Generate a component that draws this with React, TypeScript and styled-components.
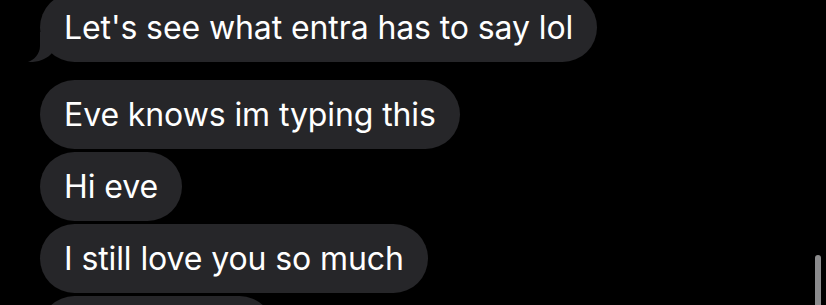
import React from 'react'
import styled, { createGlobalStyle } from 'styled-components'

const GlobalStyle = createGlobalStyle`
  html, body {
    margin: 0;
    padding: 0;
    background: #000;
    overflow: hidden;
  }
  body {
    font-family: Inter, "Open Sans", "Liberation Sans", sans-serif;
  }
`

const Screen = styled.div`
  position: relative;
  width: 826px;
  height: 305px;
  background: #000;
  overflow: hidden;
`

const Thread = styled.div`
  display: flex;
  flex-direction: column;
  align-items: flex-start;
  gap: 3px;
  padding-left: 40px;
  margin-top: -7px;
`

const Bubble = styled.div<{ $gapTop?: number; $width?: number }>`
  position: relative;
  box-sizing: border-box;
  height: 69px;
  display: flex;
  align-items: center;
  padding: 0 24px;
  margin-top: ${({ $gapTop }) => ($gapTop ? `${$gapTop}px` : '0')};
  width: ${({ $width }) => ($width ? `${$width}px` : 'auto')};
  background: #262629;
  color: #fff;
  border-radius: 35px;
  font-size: 32px;
  letter-spacing: -0.1px;
  white-space: nowrap;
`

const Tail = styled.svg`
  position: absolute;
  left: -12px;
  bottom: 0;
  width: 30px;
  height: 30px;
`

const ScrollThumb = styled.div`
  position: absolute;
  right: 5px;
  top: 255px;
  width: 6px;
  height: 60px;
  border-radius: 3px;
  background: #8b8b8d;
`

const messages: { text: string; tail?: boolean; gap?: number; width?: number }[] = [
  { text: "Let's see what entra has to say lol", tail: true },
  { text: 'Eve knows im typing this', gap: 15 },
  { text: 'Hi eve' },
  { text: 'I still love you so much' },
  { text: '', width: 234 },
]

export default function App() {
  return (
    <Screen>
      <GlobalStyle />
      <Thread>
        {messages.map((m, i) => (
          <Bubble key={i} $gapTop={m.gap} $width={m.width}>
            {m.tail && (
              <Tail viewBox="0 0 30 30">
                <path
                  d="M12 0 L12 14 C12 22 6 28 0 30 C6 30.5 12 29 16 27 C19 25.5 22 23.5 24 21 L24 0 Z"
                  fill="#262629"
                />
              </Tail>
            )}
            {m.text}
          </Bubble>
        ))}
      </Thread>
      <ScrollThumb />
    </Screen>
  )
}
